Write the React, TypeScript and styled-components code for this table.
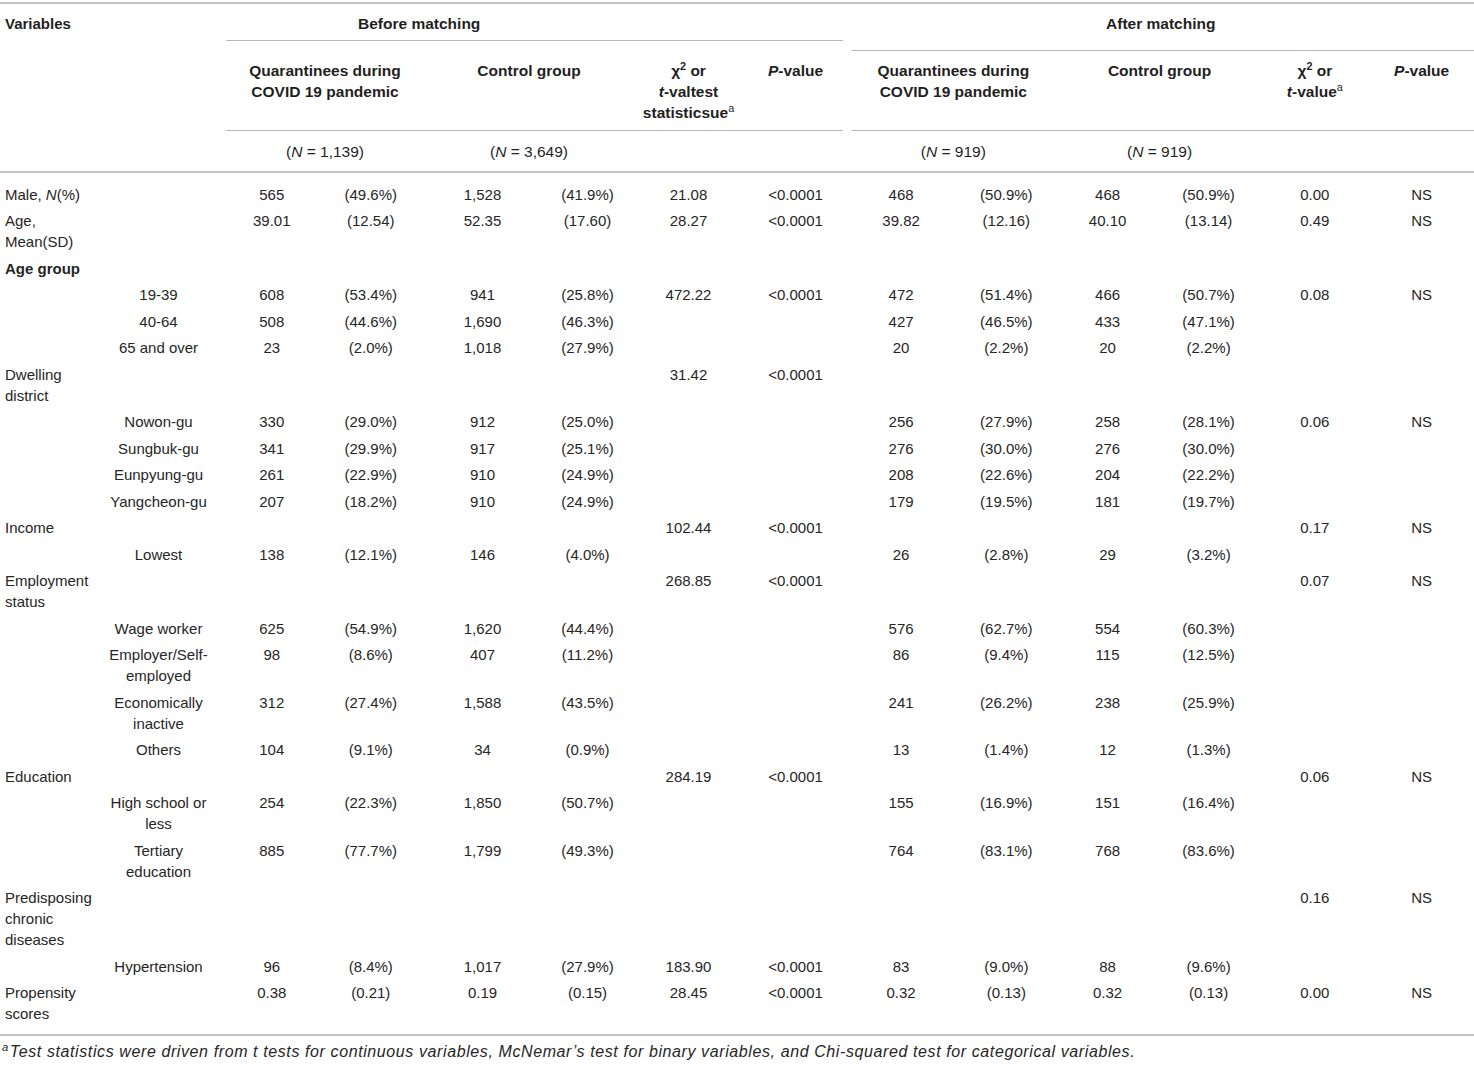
import React from "react";
import styled, { createGlobalStyle } from "styled-components";

const GlobalStyle = createGlobalStyle`
  html, body {
    margin: 0;
    padding: 0;
    overflow: hidden;
    background: #ffffff;
  }
  body {
    font-family: "Liberation Sans", Arial, Helvetica, sans-serif;
    color: #262626;
  }
`;

const RULE = "#c4c4c4";
const THIN = "#b8b8b8";

const Table = styled.table`
  width: 1474px;
  table-layout: fixed;
  border-collapse: separate;
  border-spacing: 0;
  margin-top: 2px;
  border-top: 2px solid ${RULE};
  font-size: 15px;
  line-height: 21px;
  color: #262626;
`;

const Col = styled.col<{ $w: number }>`
  width: ${(p) => p.$w}px;
`;

type RuleKind = "none" | "full" | "endGap" | "startGap";

const HeadCell = styled.th<{
  $rule?: RuleKind;
  $lift?: number;
  $indent?: number;
  $padTop: number;
  $padBottom: number;
  $bold?: boolean;
  $ruled?: boolean;
}>`
  vertical-align: top;
  font-size: 15.5px;
  color: #1f1f1f;
  font-weight: ${(p) => (p.$bold === false ? 400 : 700)};
  text-align: ${(p) => (p.$indent !== undefined ? "left" : "center")};
  padding: ${(p) => p.$padTop}px 0 ${(p) => p.$padBottom}px
    ${(p) => (p.$indent !== undefined ? p.$indent : 0)}px;
  background-image: ${(p) =>
    p.$rule && p.$rule !== "none" ? `linear-gradient(${THIN}, ${THIN})` : "none"};
  background-repeat: no-repeat;
  background-size: ${(p) =>
    p.$rule === "endGap"
      ? "calc(100% - 5px) 1px"
      : p.$rule === "startGap"
      ? "calc(100% - 4px) 1px"
      : "100% 1px"};
  background-position: ${(p) => (p.$rule === "startGap" ? "right" : "left")} 0
    bottom ${(p) => p.$lift ?? 0}px;
  border-bottom: ${(p) => (p.$ruled ? `2px solid ${RULE}` : "none")};
`;

const LeftHead = styled(HeadCell)`
  font-size: 15px;
  text-align: left;
  padding-left: 5px;
`;

const Em = styled.i`
  font-style: italic;
`;

const Sup = styled.sup<{ $light?: boolean }>`
  font-size: 0.7em;
  line-height: 0;
  vertical-align: 0.55em;
  font-weight: ${(p) => (p.$light ? 400 : "inherit")};
`;

const Body = styled.tbody`
  & > tr:first-child > td {
    padding-top: 10.5px;
  }
  & > tr:last-child > td {
    padding-bottom: 10.25px;
    border-bottom: 2px solid ${RULE};
  }
`;

const Cell = styled.td<{ $kind: "label" | "sub" | "value"; $bold?: boolean }>`
  vertical-align: top;
  padding: 2.75px ${(p) => (p.$kind === "sub" ? "10px" : "2px")} 2.75px
    ${(p) => (p.$kind === "value" ? "2px" : "5px")};
  text-align: ${(p) => (p.$kind === "label" ? "left" : "center")};
  font-weight: ${(p) => (p.$bold ? 700 : 400)};
  white-space: ${(p) => (p.$kind === "value" ? "nowrap" : "normal")};
`;

const Footnote = styled.p`
  margin: 0;
  padding: 8px 0 0 2px;
  font-size: 16px;
  line-height: 16px;
  letter-spacing: 0.6px;
  font-style: italic;
  color: #262626;
`;

const FootMark = styled.sup`
  font-size: 0.7em;
  line-height: 0;
  vertical-align: 0.55em;
  margin-right: 1px;
`;

type Row = {
  label?: React.ReactNode;
  sub?: string;
  bold?: boolean;
  v: string[];
};

const E = "";

const rows: Row[] = [
  {
    label: (
      <>
        Male, <Em>N</Em>(%)
      </>
    ),
    v: ["565", "(49.6%)", "1,528", "(41.9%)", "21.08", "<0.0001", "468", "(50.9%)", "468", "(50.9%)", "0.00", "NS"],
  },
  {
    label: "Age, Mean(SD)",
    v: ["39.01", "(12.54)", "52.35", "(17.60)", "28.27", "<0.0001", "39.82", "(12.16)", "40.10", "(13.14)", "0.49", "NS"],
  },
  { label: "Age group", bold: true, v: [E, E, E, E, E, E, E, E, E, E, E, E] },
  { sub: "19-39", v: ["608", "(53.4%)", "941", "(25.8%)", "472.22", "<0.0001", "472", "(51.4%)", "466", "(50.7%)", "0.08", "NS"] },
  { sub: "40-64", v: ["508", "(44.6%)", "1,690", "(46.3%)", E, E, "427", "(46.5%)", "433", "(47.1%)", E, E] },
  { sub: "65 and over", v: ["23", "(2.0%)", "1,018", "(27.9%)", E, E, "20", "(2.2%)", "20", "(2.2%)", E, E] },
  { label: "Dwelling district", v: [E, E, E, E, "31.42", "<0.0001", E, E, E, E, E, E] },
  { sub: "Nowon-gu", v: ["330", "(29.0%)", "912", "(25.0%)", E, E, "256", "(27.9%)", "258", "(28.1%)", "0.06", "NS"] },
  { sub: "Sungbuk-gu", v: ["341", "(29.9%)", "917", "(25.1%)", E, E, "276", "(30.0%)", "276", "(30.0%)", E, E] },
  { sub: "Eunpyung-gu", v: ["261", "(22.9%)", "910", "(24.9%)", E, E, "208", "(22.6%)", "204", "(22.2%)", E, E] },
  { sub: "Yangcheon-gu", v: ["207", "(18.2%)", "910", "(24.9%)", E, E, "179", "(19.5%)", "181", "(19.7%)", E, E] },
  { label: "Income", v: [E, E, E, E, "102.44", "<0.0001", E, E, E, E, "0.17", "NS"] },
  { sub: "Lowest", v: ["138", "(12.1%)", "146", "(4.0%)", E, E, "26", "(2.8%)", "29", "(3.2%)", E, E] },
  { label: "Employment status", v: [E, E, E, E, "268.85", "<0.0001", E, E, E, E, "0.07", "NS"] },
  { sub: "Wage worker", v: ["625", "(54.9%)", "1,620", "(44.4%)", E, E, "576", "(62.7%)", "554", "(60.3%)", E, E] },
  { sub: "Employer/Self-employed", v: ["98", "(8.6%)", "407", "(11.2%)", E, E, "86", "(9.4%)", "115", "(12.5%)", E, E] },
  { sub: "Economically inactive", v: ["312", "(27.4%)", "1,588", "(43.5%)", E, E, "241", "(26.2%)", "238", "(25.9%)", E, E] },
  { sub: "Others", v: ["104", "(9.1%)", "34", "(0.9%)", E, E, "13", "(1.4%)", "12", "(1.3%)", E, E] },
  { label: "Education", v: [E, E, E, E, "284.19", "<0.0001", E, E, E, E, "0.06", "NS"] },
  { sub: "High school or less", v: ["254", "(22.3%)", "1,850", "(50.7%)", E, E, "155", "(16.9%)", "151", "(16.4%)", E, E] },
  { sub: "Tertiary education", v: ["885", "(77.7%)", "1,799", "(49.3%)", E, E, "764", "(83.1%)", "768", "(83.6%)", E, E] },
  { label: "Predisposing chronic diseases", v: [E, E, E, E, E, E, E, E, E, E, "0.16", "NS"] },
  { sub: "Hypertension", v: ["96", "(8.4%)", "1,017", "(27.9%)", "183.90", "<0.0001", "83", "(9.0%)", "88", "(9.6%)", E, E] },
  {
    label: "Propensity scores",
    v: ["0.38", "(0.21)", "0.19", "(0.15)", "28.45", "<0.0001", "0.32", "(0.13)", "0.32", "(0.13)", "0.00", "NS"],
  },
];

const widths = [96, 130, 91.5, 106.5, 117, 93, 109, 105, 106, 104.5, 98, 104, 108.5, 105];

export default function App() {
  return (
    <>
      <GlobalStyle />
      <Table>
        <colgroup>
          {widths.map((w, i) => (
            <Col key={i} $w={w} />
          ))}
        </colgroup>
        <thead>
          <tr>
            <LeftHead colSpan={2} $padTop={8.5} $padBottom={17.5}>
              Variables
            </LeftHead>
            <HeadCell colSpan={6} $padTop={8.5} $padBottom={17.5} $rule="endGap" $lift={10} $indent={132}>
              Before matching
            </HeadCell>
            <HeadCell colSpan={6} $padTop={8.5} $padBottom={17.5} $rule="startGap" $lift={0} $indent={258}>
              After matching
            </HeadCell>
          </tr>
          <tr>
            <HeadCell colSpan={2} $padTop={8.5} $padBottom={8.5} />
            <HeadCell colSpan={2} $padTop={8.5} $padBottom={8.5} $rule="full">
              Quarantinees during
              <br />
              COVID 19 pandemic
            </HeadCell>
            <HeadCell colSpan={2} $padTop={8.5} $padBottom={8.5} $rule="full">
              Control group
            </HeadCell>
            <HeadCell $padTop={8.5} $padBottom={8.5} $rule="full">
              χ<Sup>2</Sup> or
              <br />
              <Em>t</Em>-valtest
              <br />
              statisticsue<Sup $light>a</Sup>
            </HeadCell>
            <HeadCell $padTop={8.5} $padBottom={8.5} $rule="endGap">
              <Em>P</Em>-value
            </HeadCell>
            <HeadCell colSpan={2} $padTop={8.5} $padBottom={8.5} $rule="startGap">
              Quarantinees during
              <br />
              COVID 19 pandemic
            </HeadCell>
            <HeadCell colSpan={2} $padTop={8.5} $padBottom={8.5} $rule="full">
              Control group
            </HeadCell>
            <HeadCell $padTop={8.5} $padBottom={8.5} $rule="full">
              χ<Sup>2</Sup> or
              <br />
              <Em>t</Em>-value<Sup $light>a</Sup>
            </HeadCell>
            <HeadCell $padTop={8.5} $padBottom={8.5} $rule="full">
              <Em>P</Em>-value
            </HeadCell>
          </tr>
          <tr>
            <HeadCell colSpan={2} $padTop={9.5} $padBottom={9.5} $ruled />
            <HeadCell colSpan={2} $padTop={9.5} $padBottom={9.5} $ruled $bold={false}>
              (<Em>N</Em> = 1,139)
            </HeadCell>
            <HeadCell colSpan={2} $padTop={9.5} $padBottom={9.5} $ruled $bold={false}>
              (<Em>N</Em> = 3,649)
            </HeadCell>
            <HeadCell colSpan={2} $padTop={9.5} $padBottom={9.5} $ruled />
            <HeadCell colSpan={2} $padTop={9.5} $padBottom={9.5} $ruled $bold={false}>
              (<Em>N</Em> = 919)
            </HeadCell>
            <HeadCell colSpan={2} $padTop={9.5} $padBottom={9.5} $ruled $bold={false}>
              (<Em>N</Em> = 919)
            </HeadCell>
            <HeadCell colSpan={2} $padTop={9.5} $padBottom={9.5} $ruled />
          </tr>
        </thead>
        <Body>
          {rows.map((r, i) => (
            <tr key={i}>
              <Cell $kind="label" $bold={r.bold}>
                {r.label}
              </Cell>
              <Cell $kind="sub">{r.sub}</Cell>
              {r.v.map((val, j) => (
                <Cell key={j} $kind="value">
                  {val}
                </Cell>
              ))}
            </tr>
          ))}
        </Body>
      </Table>
      <Footnote>
        <FootMark>a</FootMark>Test statistics were driven from t tests for continuous variables, McNemar’s test for
        binary variables, and Chi-squared test for categorical variables.
      </Footnote>
    </>
  );
}
